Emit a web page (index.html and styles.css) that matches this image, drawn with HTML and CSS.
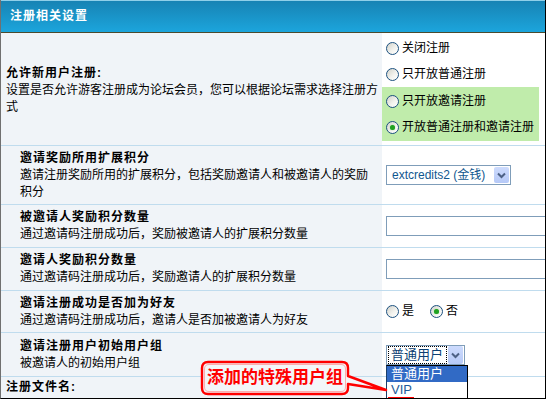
FILE: index.html
```html
<!DOCTYPE html>
<html lang="zh-CN">
<head>
  <meta charset="UTF-8">
  <title>注册相关设置</title>
  <link rel="stylesheet" href="styles.css">
</head>
<body>
  <div class="panel">
    <div class="panel-head">注册相关设置</div>

    <div class="row row-reg">
      <div class="label label-main label-reg">
        <b>允许新用户注册:</b>
        设置是否允许游客注册成为论坛会员，您可以根据论坛需求选择注册方式
      </div>
      <div class="field field-choices">
        <div class="opt"><span class="radio"></span>关闭注册</div>
        <div class="opt"><span class="radio"></span>只开放普通注册</div>
        <div class="opt-group">
          <div class="opt"><span class="radio"></span>只开放邀请注册</div>
          <div class="opt"><span class="radio checked"></span>开放普通注册和邀请注册</div>
        </div>
      </div>
    </div>

    <div class="row row-credit">
      <div class="label">
        <b>邀请奖励所用扩展积分</b>
        邀请注册奖励所用的扩展积分，包括奖励邀请人和被邀请人的奖励积分
      </div>
      <div class="field">
        <div class="select select-credit">
          <span class="select-text">extcredits2 (金钱)</span>
          <span class="select-btn">
            <svg width="15" height="16" viewBox="0 0 15 16"><path d="M4 6.5 L7.5 10 L11 6.5" fill="none" stroke="#4d6185" stroke-width="2"/></svg>
          </span>
        </div>
      </div>
    </div>

    <div class="row row-num">
      <div class="label">
        <b>被邀请人奖励积分数量</b>
        通过邀请码注册成功后，奖励被邀请人的扩展积分数量
      </div>
      <div class="field">
        <input class="text-input" type="text">
      </div>
    </div>

    <div class="row row-num">
      <div class="label">
        <b>邀请人奖励积分数量</b>
        通过邀请码注册成功后，奖励邀请人的扩展积分数量
      </div>
      <div class="field">
        <input class="text-input" type="text">
      </div>
    </div>

    <div class="row row-friend">
      <div class="label">
        <b>邀请注册成功是否加为好友</b>
        通过邀请码注册成功后，邀请人是否加被邀请人为好友
      </div>
      <div class="field">
        <span class="radio"></span><span class="inline-text">是</span>
        <span class="radio checked"></span><span>否</span>
      </div>
    </div>

    <div class="row row-group">
      <div class="label">
        <b>邀请注册用户初始用户组</b>
        被邀请人的初始用户组
      </div>
      <div class="field">
        <div class="select select-group">
          <span class="select-text">普通用户</span>
          <span class="select-btn">
            <svg width="15" height="18" viewBox="0 0 15 18"><path d="M4 7.5 L7.5 11 L11 7.5" fill="none" stroke="#4d6185" stroke-width="2"/></svg>
          </span>
          <ul class="dropdown">
            <li class="active">普通用户</li>
            <li>VIP<span class="underline"></span></li>
          </ul>
        </div>
      </div>
    </div>

    <div class="row row-last">
      <div class="label label-main">
        <b>注册文件名:</b>
      </div>
      <div class="field"></div>
    </div>

    <!-- note bubble pointing at the new group -->
    <svg class="callout" width="190" height="40" viewBox="0 0 190 40">
      <path d="M8 4 H142 Q148 4 148 10 V18 L186 32 L148 26 V30 Q148 36 142 36 H8 Q2 36 2 30 V10 Q2 4 8 4 Z" fill="#f3f6f9" stroke="#ff0000" stroke-width="2.4" stroke-linejoin="round"/>
      <path d="M9 6.5 H141 Q145.5 6.5 145.5 11 V29 Q145.5 33.5 141 33.5 H9 Q4.5 33.5 4.5 29 V11 Q4.5 6.5 9 6.5 Z" fill="none" stroke="#ff9a9a" stroke-width="0.8"/>
    </svg>
    <div class="callout-text">添加的特殊用户组</div>
  </div>
</body>
</html>
```

FILE: styles.css
```css
* {
  box-sizing: border-box;
}
body {
  margin: 0;
  background-color: #ffffff;
  font-family: 'Liberation Sans', 'Noto Sans CJK SC', sans-serif;
  font-size: 12px;
  line-height: 17px;
  color: #000000;
}
.panel {
  position: relative;
  width: 546px;
  height: 399px;
  border-left: 1px solid #707070;
  border-right: 1px solid #000000;
  border-bottom: 1px solid #000000;
  overflow: hidden;
  display: flex;
  flex-direction: column;
}
.panel-head {
  height: 33px;
  flex: none;
  padding-left: 9px;
  line-height: 32px;
  color: #ffffff;
  font-weight: bold;
  letter-spacing: 1px;
  background: linear-gradient(#8fcfe9 0, #8fcfe9 1px, #1783b4 1px, #1ca5dc 100%);
  border-bottom: 1px solid #4b4b2e;
}
.row {
  display: flex;
  flex: none;
  border-bottom: 1px solid #c0dcee;
}
.row-reg { height: 113px; }
.row-credit { height: 59px; }
.row-num { height: 43px; }
.row-friend { height: 42px; }
.row-group { height: 44px; }
.row-last {
  flex: 1;
  border-bottom: none;
}
.label {
  width: 381px;
  flex: none;
  padding: 0 3px 0 19px;
  background-color: #f0f4f8;
  display: flex;
  flex-direction: column;
  justify-content: center;
}
.label b {
  display: block;
  letter-spacing: 1px;
}
.label-main {
  padding-left: 5px;
}
.label-reg {
  padding-top: 3px;
}
.field {
  flex: 1;
  padding-left: 4px;
  display: flex;
  align-items: center;
  white-space: nowrap;
}
.field-choices {
  padding: 2px 0 0 0;
  flex-direction: column;
  align-items: flex-start;
}
.opt {
  height: 26px;
  padding-left: 4px;
  display: flex;
  align-items: center;
}
.opt-group {
  width: 157px;
  padding: 1px 0;
  background-color: #c0ecab;
}
.radio {
  position: relative;
  flex: none;
  width: 13px;
  height: 13px;
  margin-right: 3px;
  border: 1px solid #1c5180;
  border-radius: 50%;
  background: linear-gradient(135deg, #d2d2ca 0%, #f4f4f0 60%, #ffffff 100%);
}
.radio.checked::after {
  content: '';
  position: absolute;
  left: 3px;
  top: 3px;
  width: 5px;
  height: 5px;
  border-radius: 50%;
  background-color: #21a121;
  box-shadow: 0 0 1px #5ccf5c;
}
.inline-text {
  margin-right: 16px;
}
.select {
  position: relative;
  display: flex;
  align-items: center;
  padding: 1px;
  border: 1px solid #7f9db9;
  background-color: #ffffff;
}
.select-text {
  flex: 1;
  color: #11578f;
}
.select-btn {
  flex: none;
  display: flex;
  border-radius: 2px;
  background: linear-gradient(#cddbfd, #b6c9f7);
}
.select-credit {
  width: 125px;
  height: 20px;
}
.select-credit .select-text {
  padding-left: 4px;
}
.select-group {
  width: 79px;
  height: 20px;
  margin-top: 1px;
}
.select-group .select-text {
  height: 18px;
  margin-right: 1px;
  padding-left: 2px;
  border: 1px dotted #000000;
  font-size: 13px;
  line-height: 16px;
  color: #0c3f73;
}
.dropdown {
  position: absolute;
  left: -1px;
  top: 19px;
  width: 82px;
  margin: 0;
  padding: 0;
  list-style: none;
  border: 1px solid #000000;
  border-left-color: #1c3f6a;
  background-color: #ffffff;
  font-size: 13px;
  line-height: 16px;
  z-index: 1;
}
.dropdown li {
  position: relative;
  height: 16px;
  padding-left: 4px;
  color: #1f5c99;
}
.dropdown li.active {
  background-color: #316ac5;
  color: #ffffff;
}
.underline {
  position: absolute;
  left: 1px;
  top: 15px;
  width: 26px;
  height: 2px;
  background-color: #ff0000;
}
.text-input {
  width: 200px;
  height: 20px;
  margin: 0;
  padding: 0 3px;
  border: 1px solid #7f9db9;
  background-color: #ffffff;
  font-family: inherit;
  font-size: 12px;
  flex: none;
}
.callout {
  position: absolute;
  left: 199px;
  top: 358px;
  z-index: 2;
}
.callout-text {
  position: absolute;
  left: 206px;
  top: 366px;
  z-index: 3;
  color: #ff0000;
  font-family: 'Noto Sans CJK SC', sans-serif;
  font-size: 17px;
  font-weight: bold;
  line-height: 20px;
}
```
